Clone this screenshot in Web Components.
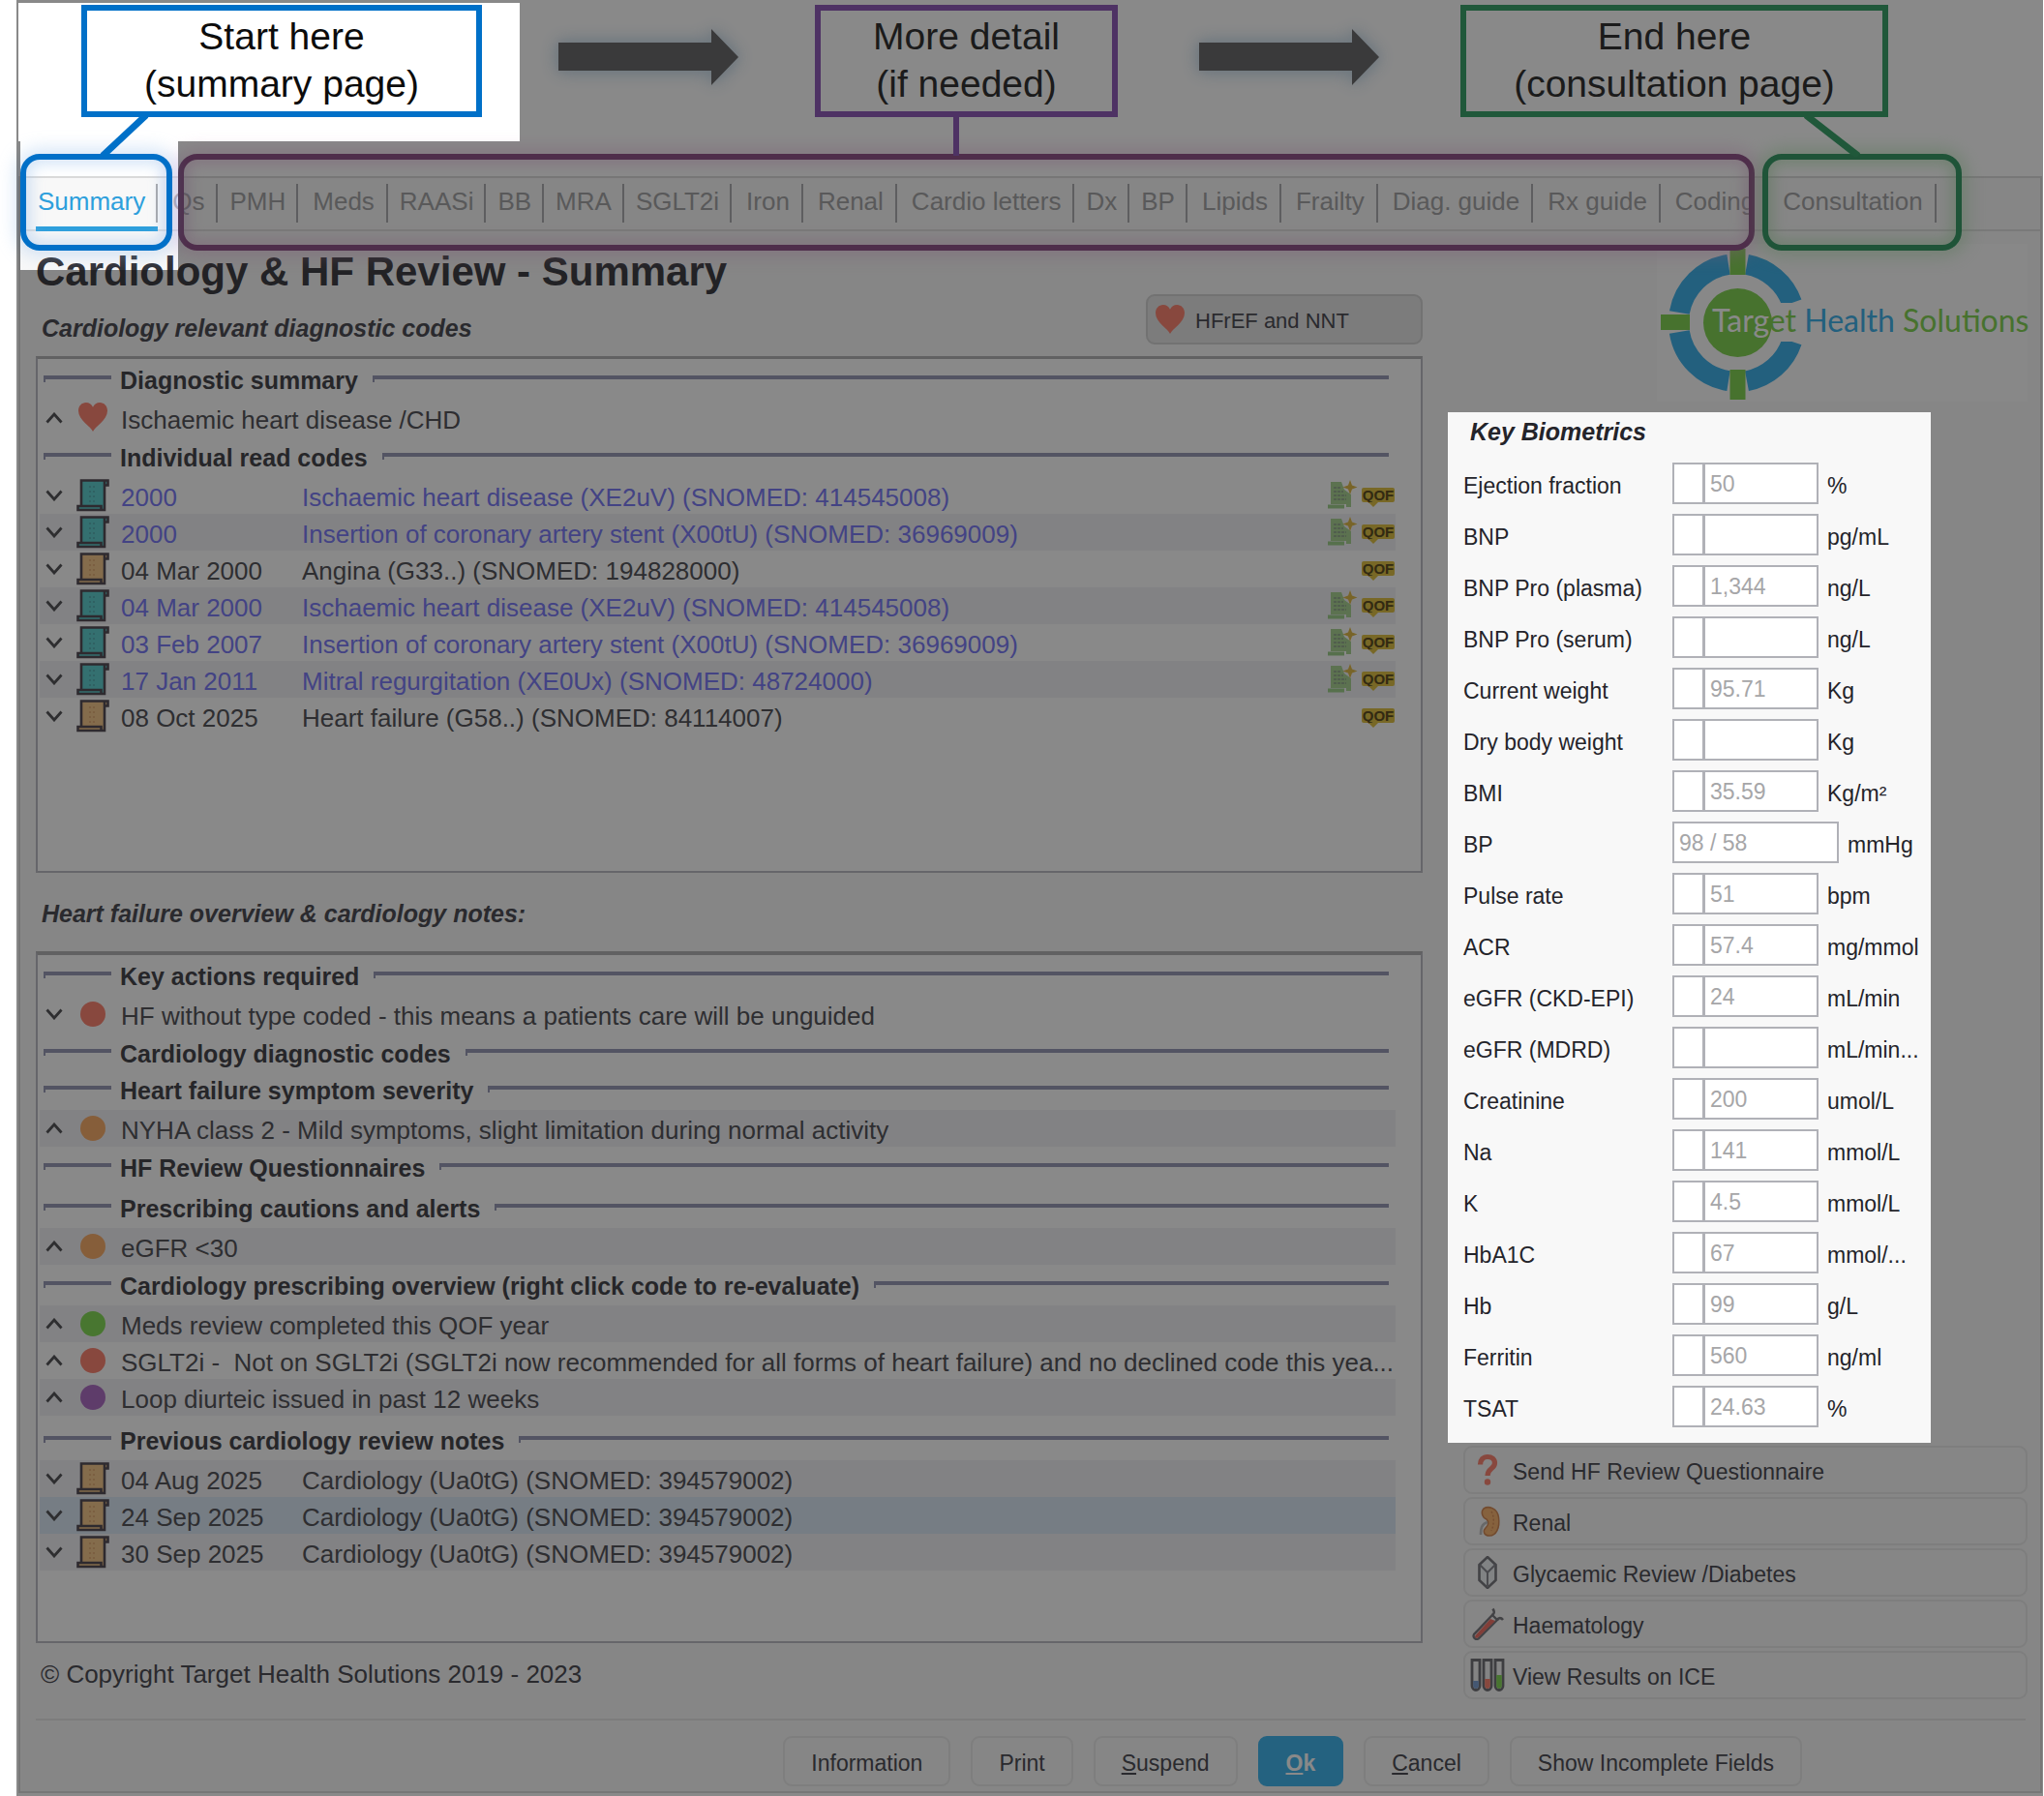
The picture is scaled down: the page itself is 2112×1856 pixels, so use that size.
<!DOCTYPE html>
<html lang="en">
<head>
<meta charset="utf-8">
<title>Cardiology &amp; HF Review</title>
<style>
  body { margin: 0; background: #fff; font-family: "Liberation Sans", Arial, sans-serif; color: #38383e; }
</style>
</head>
<body>
<review-page></review-page>

<script>
const ICONS = {
  heart: `<svg viewBox="0 0 30 30" width="30" height="30"><path d="M15 30C13 25 0 18 0 8.500C0 3.500 3.500 0 7.800 0C11 0 13.800 1.800 15 4.800C16.200 1.800 19 0 22.200 0C26.500 0 30 3.500 30 8.500C30 18 17 25 15 30Z" fill="#fc7c68"/></svg>`,
  scroll: `<svg viewBox="0 0 34 34" width="34" height="34"><path d="M5 2H31.500V6.500H29V31.500H1.500V27.500H5Z" fill="var(--paper)"/><path d="M5 27.500V1.500H32.500V6.500H29V32H1.500V28H25.500V32M29 6.500V2" fill="none" stroke="#48404a" stroke-width="2.600"/><path d="M13 8h8M13 13h8M13 18h8M13 23h8" stroke="var(--ink)" stroke-width="1.200" stroke-dasharray="2 2"/></svg>`,
  question: `<svg viewBox="0 0 34 34" width="34" height="34"><path d="M9.500 11.500C9.500 6.500 12.500 3.500 17 3.500C21.500 3.500 24.500 6 24.500 10C24.500 16 17 15 17 23" fill="none" stroke="#fc7c68" stroke-width="5.200"/><circle cx="17" cy="29.500" r="3.200" fill="#fc7c68"/></svg>`,
  kidney: `<svg viewBox="0 0 34 34" width="34" height="34"><path d="M13 4C18 1 27 3 28.500 13C30 24 26 32 19 32C13 32 12 27 15 24C18 21 19 18 16 15C11 13 10 7 13 4Z" fill="#f8b068" stroke="#d08048" stroke-width="1.500"/><path d="M21 7c3 5 3 13 0 20" fill="none" stroke="#d88850" stroke-width="1.500" stroke-dasharray="2 2"/><path d="M17 18C11 20 10 24 10 31" fill="none" stroke="#bdbdbd" stroke-width="2.600"/></svg>`,
  crystal: `<svg viewBox="0 0 34 34" width="34" height="34"><path d="M17 1L25.500 9V25L17 33L8.500 25V9Z" fill="#eef2f4" stroke="#707076" stroke-width="2.600"/><path d="M9 9L17 17L25 9M17 17V32" fill="none" stroke="#808088" stroke-width="2"/></svg>`,
  tube: `<svg viewBox="0 0 34 34" width="34" height="34"><path d="M22 8L27 13L7.500 32.500C4.500 34 1.500 31 3 28Z" fill="#f5f5f5" stroke="#707076" stroke-width="2.400"/><path d="M20 12L25 14L7 31.500C5 32.500 3 31 4.500 29Z" fill="#f0685c"/><path d="M22 8C25 6 24 4 22.500 1.500M27 13C28.500 10.500 31 10.500 33 13" fill="none" stroke="#707076" stroke-width="2.600"/></svg>`,
  tubes: `<svg viewBox="0 0 36 34" width="36" height="34"><g fill="#f4f4f4" stroke="#68686e" stroke-width="2.800"><path d="M2 1.500H10V28C10 34 2 34 2 28Z"/><path d="M14 1.500H22V28C22 34 14 34 14 28Z"/><path d="M26 1.500H34V28C34 34 26 34 26 28Z"/></g><path d="M3.200 23H8.800V28C8.800 32 3.200 32 3.200 28Z" fill="#749ad0"/><path d="M15.200 21H20.800V28C20.800 32 15.200 32 15.200 28Z" fill="#fc7c68"/><path d="M27.200 17H32.800V28C32.800 32 27.200 32 27.200 28Z" fill="#7cd44c"/></svg>`,
  up: `<svg viewBox="0 0 18 12" width="18" height="12"><path d="M1.500 10.500L9 2L16.500 10.500" fill="none" stroke="#48484c" stroke-width="2.800"/></svg>`,
  down: `<svg viewBox="0 0 18 12" width="18" height="12"><path d="M1.500 1.500L9 10L16.500 1.500" fill="none" stroke="#48484c" stroke-width="2.800"/></svg>`,
  note: `<svg viewBox="0 0 32 32" width="32" height="32"><path d="M4 2H15L18 10L25 15V28H20V25H4Z" fill="#a4d08c"/><path d="M7 8h7M7 12h10M7 16h13M7 20h13" stroke="#889c84" stroke-width="1.600" stroke-dasharray="3 1"/><path d="M1 27.500H18" stroke="#98cc84" stroke-width="4"/><path d="M24 0L26 5.500L31.500 7.500L26 9.500L24 15L22 9.500L16.500 7.500L22 5.500Z" fill="#dcb43c"/></svg>`
};

function define(name, html, setup) {
  const tpl = document.createElement('template');
  tpl.innerHTML = html;
  customElements.define(name, class extends HTMLElement {
    constructor() {
      super();
      this.attachShadow({ mode: 'open' }).append(tpl.content.cloneNode(true));
    }
    connectedCallback() { if (setup) setup(this, this.shadowRoot); }
  });
}

/* Boxed caption above the tabs */
define('step-callout', `
<style>
  :host { display: block; box-sizing: border-box; border: 6px solid var(--tone); padding: 2px 0 4px;
    font-size: 39px; line-height: 49px; text-align: center; color: var(--text, #222); white-space: nowrap; }
</style><slot></slot>`);

define('step-arrow', `
<style>
  :host { display: block; width: 186px; height: 58px; }
  svg { display: block; overflow: visible; filter: drop-shadow(0 0 9px #c8dcea) drop-shadow(0 0 5px #d4e2ee); }
</style>
<svg viewBox="0 0 186 58" width="186" height="58"><path d="M0 14H158V0L186 29L158 58V43H0Z" fill="#606062"/></svg>`);

define('nav-tab', `
<style>
  :host { display: flex; align-items: center; position: relative; height: 51px; }
  button { height: 40px; box-sizing: border-box; border: 0; border-right: 2px solid #a8a8ac; background: none; margin: 0; padding: 0 12px 4px 15px;
    font: 26px/36px "Liberation Sans", Arial, sans-serif; color: #9e9ea0; white-space: nowrap; }
  :host([compact]) button { padding: 0 11px 4px 12px; }
  :host([active]) button { padding: 0 11px 4px 2px; color: #2d9fdc; }
  :host([active])::after { content: ""; position: absolute; left: 0; right: 0; bottom: -4px; height: 5px; background: #2d9fdc; }
</style><button role="tab" type="button"><slot></slot></button>`);

/* Rounded marker drawn round a run of tabs */
define('tab-marker', `
<style>
  :host { display: block; position: absolute; box-sizing: border-box; height: 100px; border: 6px solid var(--tone); border-radius: 20px;
    box-shadow: 0 0 18px 5px var(--glow), inset 0 0 14px 5px var(--glow); pointer-events: none; }
</style>`);

define('group-head', `
<style>
  :host { display: flex; align-items: flex-end; box-sizing: border-box; height: 42px; margin: 0 7px 0 2px; gap: 9px; }
  :host([tight]) { height: 38px; }
  :host([roomy]) { height: 46px; }
  span { font-size: 25px; font-weight: bold; line-height: 30px; margin-bottom: 5px; white-space: nowrap; color: #38383e; }
  i { height: 7px; margin-bottom: 18px; flex: 1; margin-left: 6px;
    background: linear-gradient(#9294b2, #9294b2) 0 0 / 100% 4px no-repeat, linear-gradient(#9294b2, #9294b2) 0 0 / 2px 7px no-repeat; }
  i:first-of-type { flex: 0 0 70px; margin-left: 2px; }
</style><i></i><span><slot></slot></span><i></i>`);

define('record-row', `
<style>
  :host { display: flex; align-items: center; height: 38px; padding-left: 6px; font-size: 26px; line-height: 32px; white-space: pre; color: #48484e; }
  :host([shade]) { background: #f1f1f5; }
  :host([selected]) { background: #d8e6f4; }
  :host([linked]) { color: #7272f4; }
  .toggle { width: 32px; padding: 0; border: 0; background: none; height: 30px; text-align: left; }
  .toggle svg { display: block; }
  .icon { width: 46px; display: flex; align-items: center; flex: none; }
  .dot { width: 26px; height: 26px; border-radius: 50%; background: var(--dot); margin-left: 4px; }
  .heart { margin: 0 0 2px 2px; display: flex; }
  .date { width: 187px; padding-top: 3px; flex: none; }
  .text { padding-top: 3px; flex: 1; min-width: 0; }
  .tags { display: flex; align-items: center; gap: 4px; padding-right: 1px; }
  .tags svg { display: block; }
  .qof { position: relative; width: 34px; height: 15px; margin-bottom: 1px; border-radius: 2px; background: #dcbc38; color: #504010;
    font: bold 15px/16px "Liberation Sans", Arial, sans-serif; text-align: center; }
  .qof::after { content: ""; position: absolute; left: 7px; top: 15px; border: 5px solid transparent; border-top-color: #dcbc38; border-bottom: 0; }
</style>
<button class="toggle" type="button" aria-label="Toggle"></button><span class="icon"></span><span class="date"></span><span class="text"><slot></slot></span><span class="tags"></span>`,
(el, root) => {
  root.querySelector('.toggle').innerHTML = ICONS[el.getAttribute('toggle') || 'down'];
  const dots = { red: '#fc7c68', orange: '#f8a860', green: '#7cd84c', purple: '#a864c0' };
  const papers = { teal: ['#54cccc', '#44909a'], tan: ['#f4c484', '#d0905a'] };
  const kind = el.getAttribute('icon'), box = root.querySelector('.icon');
  if (dots[kind]) box.innerHTML = `<span class="dot" style="--dot:${dots[kind]}"></span>`;
  else if (papers[kind]) { box.style.setProperty('--paper', papers[kind][0]); box.style.setProperty('--ink', papers[kind][1]); box.innerHTML = ICONS.scroll; }
  else box.innerHTML = `<span class="heart">${ICONS.heart}</span>`;
  const date = root.querySelector('.date');
  if (el.hasAttribute('date')) date.textContent = el.getAttribute('date'); else date.remove();
  const tags = el.getAttribute('tags') || '';
  root.querySelector('.tags').innerHTML = (tags.includes('note') ? ICONS.note : '') + (tags.includes('qof') ? '<span class="qof">QOF</span>' : '');
});

define('record-panel', `
<style>
  :host { display: block; box-sizing: border-box; border: 2px solid #b8b8c0; border-top: 3px solid #aeaeb0; background: #fff; padding: 0 26px 0 2px; overflow: hidden; }
</style><slot></slot>`);

define('bio-field', `
<style>
  :host { display: flex; align-items: center; height: 43px; font-size: 23px; line-height: 28px; color: #24242a; white-space: nowrap; }
  label { width: 216px; padding-top: 4px; flex: none; }
  .flag { box-sizing: border-box; width: 32px; height: 43px; border: 2px solid #b0b1b7; border-right-width: 1px; background: #fff; }
  input { box-sizing: border-box; width: 119px; height: 43px; margin: 0; border: 2px solid #b0b1b7; border-radius: 0; background: #fff;
    padding: 1px 5px 0; font: 23px "Liberation Sans", Arial, sans-serif; color: #a6a6a8; outline: 0; }
  :host([single]) .flag { display: none; }
  :host([single]) input { width: 172px; }
  .unit { padding: 4px 0 0 9px; }
</style>
<label for="value"><slot></slot></label><span class="flag"></span><input id="value" readonly><span class="unit"></span>`,
(el, root) => {
  root.querySelector('input').value = el.getAttribute('value') || '';
  root.querySelector('.unit').textContent = el.getAttribute('unit');
});

/* Raised above the dimming layer so that it stays bright */
define('bio-panel', `
<style>
  :host { display: flex; flex-direction: column; gap: 10px; position: relative; z-index: 5; box-sizing: border-box; width: 499px; background: #f8f8f8; padding: 5px 0 16px 16px; }
  h2 { margin: 0 0 7px 7px; font: italic bold 25px/30px "Liberation Sans", Arial, sans-serif; color: #24242a; }
</style><h2>Key Biometrics</h2><slot></slot>`);

define('side-button', `
<style>
  :host { display: block; }
  button { display: flex; align-items: center; width: 100%; height: 50px; box-sizing: border-box; margin: 0; padding: 0 6px; text-align: left;
    border: 2px solid #e8e8e8; border-radius: 9px; background: none; font: 23px/28px "Liberation Sans", Arial, sans-serif; color: #404048; }
  .icon { display: flex; justify-content: center; width: 34px; margin-right: 9px; }
  .icon svg { flex: none; }
  .text { padding-top: 4px; }
  :host([filled]) { width: 286px; }
  :host([filled]) button { height: 52px; background: #e4e4e4; border-color: #d0d0d0; font-size: 22px; }
</style><button type="button"><span class="icon"></span><span class="text"><slot></slot></span></button>`,
(el, root) => { root.querySelector('.icon').innerHTML = ICONS[el.getAttribute('icon')]; });

define('action-button', `
<style>
  :host { display: block; }
  button { height: 52px; box-sizing: border-box; margin: 0; padding: 4px 27px 0; border: 2px solid #e8e8e8; border-radius: 9px; background: none;
    font: 23px/28px "Liberation Sans", Arial, sans-serif; color: #404048; }
  :host([primary]) button { background: #34b0ec; border-color: #34b0ec; color: #fff; font-weight: bold; }
</style><button type="button"><slot></slot></button>`);

define('brand-logo', `
<style>
  :host { display: block; width: 383px; height: 163px; background: #fcfcfc; }
  svg { display: block; overflow: visible; }
  text { font: 32px Lato, sans-serif; }
</style>
<svg viewBox="0 0 383 163" width="383" height="163" role="img" aria-label="Target Health Solutions">
  <g fill="none" stroke="#32ace8" stroke-width="21">
    <path d="M93 21.300A61 61 0 0 1 139.500 61"/>
    <path d="M139.500 101A61 61 0 0 1 93 141.700"/>
    <path d="M74 141.700A61 61 0 0 1 23.300 91"/>
    <path d="M23.300 71A61 61 0 0 1 74 21.300"/>
  </g>
  <path d="M125 61H153V101H125Z" fill="#fcfcfc"/>
  <g fill="#7ad048">
    <path d="M75.500 5H91.500V32H75.500ZM75.500 130H91.500V161H75.500ZM4 73H34V89H4Z"/>
    <circle cx="83.500" cy="81.500" r="35.500"/>
  </g>
  <text x="57" y="91" fill="#fff">Targ<tspan fill="#7ad048">et </tspan><tspan fill="#32ace8">Health </tspan><tspan fill="#7ad048">Solutions</tspan></text>
</svg>`);

define('review-page', `
<style>
  :host { display: block; position: relative; min-height: 100vh; margin: 0 1px 0 17px; box-sizing: border-box; }
  .steps { display: flex; align-items: flex-start; gap: 79px; height: 182px; box-sizing: border-box; padding: 5px 0 0 67px; }
  .steps step-arrow { margin-top: 25px; }
  .steps step-arrow.last { margin-left: 5px; margin-right: 5px; }
  .links { position: absolute; left: 0; top: 116px; z-index: 2; pointer-events: none; }
  .form { box-sizing: border-box; border: 2px solid #dadada; margin: 0 1px 0 2px; background: #f8f8f8; }
  .tabs { display: flex; height: 53px; border-bottom: 2px solid #dedede; padding-left: 16px; position: relative; }
  tab-marker { top: -25px; z-index: 1; }
  .main { display: flex; gap: 26px; padding: 0 13px 0 16px; }
  .left { flex: 1; min-width: 0; }
  .right { width: 599px; display: flex; flex-direction: column; padding-top: 13px; }
  h1 { margin: 18px 0 0; font-size: 42px; line-height: 47px; color: #303036; }
  .sub { display: flex; justify-content: space-between; align-items: flex-end; margin-bottom: 12px; }
  h2 { margin: 0 0 2px 6px; font: italic bold 25px/30px "Liberation Sans", Arial, sans-serif; color: #404048; }
  h2.notes { margin: 27px 0 24px 6px; }
  .codes { height: 534px; }
  .overview { height: 715px; border-top-width: 4px; }
  .copy { margin: 17px 0 0 5px; font-size: 26px; line-height: 30px; color: #404048; }
  brand-logo { align-self: flex-end; margin-bottom: 11px; }
  .side { display: flex; flex-direction: column; gap: 3px; margin: 3px 0 0 16px; }
  footer { display: flex; justify-content: flex-end; gap: 21px; margin: 20px 15px 0 16px; padding: 16px 231px 5px 0; border-top: 2px solid #e4e4e4; }
  .dim { position: absolute; inset: 0; z-index: 3; background: rgba(20, 20, 20, .5); pointer-events: none;
    clip-path: polygon(evenodd, 0 0, 100% 0, 100% 100%, 0 100%, 0 0, 2px 3px, 520px 3px, 520px 146px, 167px 146px, 167px 279px, 4px 279px, 4px 146px, 2px 146px, 2px 3px, 0 0); }
</style>
<div class="steps">
  <step-callout style="--tone:#0070c8;--text:#0c0c0c;width:414px">Start here<br>(summary page)</step-callout>
  <step-arrow></step-arrow>
  <step-callout style="--tone:#8850b4;width:313px">More detail<br>(if needed)</step-callout>
  <step-arrow class="last"></step-arrow>
  <step-callout style="--tone:#2c9c60;width:442px">End here<br>(consultation page)</step-callout>
</div>
<svg class="links" width="2000" height="46" viewBox="0 0 2000 46" fill="none" stroke-width="7">
  <path d="M134 3L89 45" stroke="#0070c8"/><path d="M971 3V45" stroke="#8850b4" stroke-width="6"/><path d="M1849 3L1903 45" stroke="#2c9c60"/>
</svg>
<div class="form">
  <nav class="tabs" role="tablist">
    <nav-tab active>Summary</nav-tab><nav-tab>Qs</nav-tab><nav-tab compact>PMH</nav-tab><nav-tab>Meds</nav-tab><nav-tab compact>RAASi</nav-tab><nav-tab compact>BB</nav-tab><nav-tab compact>MRA</nav-tab><nav-tab compact>SGLT2i</nav-tab><nav-tab>Iron</nav-tab><nav-tab>Renal</nav-tab><nav-tab>Cardio letters</nav-tab><nav-tab compact>Dx</nav-tab><nav-tab compact>BP</nav-tab><nav-tab>Lipids</nav-tab><nav-tab>Frailty</nav-tab><nav-tab>Diag. guide</nav-tab><nav-tab>Rx guide</nav-tab><nav-tab>Coding</nav-tab><nav-tab>Consultation</nav-tab>
    <tab-marker style="--tone:#8a4682;--glow:rgba(228,170,216,.45);left:163px;width:1629px"></tab-marker>
    <tab-marker style="--tone:#0070c8;--glow:rgba(150,190,235,.4);left:0;width:157px"></tab-marker>
    <tab-marker style="--tone:#2a945c;--glow:rgba(150,220,150,.45);left:1800px;width:206px"></tab-marker>
  </nav>
  <div class="main">
    <div class="left">
      <h1>Cardiology &amp; HF Review - Summary</h1>
      <div class="sub"><h2>Cardiology relevant diagnostic codes</h2><side-button filled icon="heart">HFrEF and NNT</side-button></div>
      <record-panel class="codes">
        <group-head>Diagnostic summary</group-head>
        <record-row toggle="up" icon="heart">Ischaemic heart disease /CHD</record-row>
        <group-head>Individual read codes</group-head>
        <record-row linked icon="teal" date="2000" tags="note qof">Ischaemic heart disease (XE2uV) (SNOMED: 414545008)</record-row>
        <record-row linked shade icon="teal" date="2000" tags="note qof">Insertion of coronary artery stent (X00tU) (SNOMED: 36969009)</record-row>
        <record-row icon="tan" date="04 Mar 2000" tags="qof">Angina (G33..) (SNOMED: 194828000)</record-row>
        <record-row linked shade icon="teal" date="04 Mar 2000" tags="note qof">Ischaemic heart disease (XE2uV) (SNOMED: 414545008)</record-row>
        <record-row linked icon="teal" date="03 Feb 2007" tags="note qof">Insertion of coronary artery stent (X00tU) (SNOMED: 36969009)</record-row>
        <record-row linked shade icon="teal" date="17 Jan 2011" tags="note qof">Mitral regurgitation (XE0Ux) (SNOMED: 48724000)</record-row>
        <record-row icon="tan" date="08 Oct 2025" tags="qof">Heart failure (G58..) (SNOMED: 84114007)</record-row>
      </record-panel>
      <h2 class="notes">Heart failure overview &amp; cardiology notes:</h2>
      <record-panel class="overview">
        <group-head>Key actions required</group-head>
        <record-row icon="red">HF without type coded - this means a patients care will be unguided</record-row>
        <group-head>Cardiology diagnostic codes</group-head>
        <group-head tight>Heart failure symptom severity</group-head>
        <record-row shade toggle="up" icon="orange">NYHA class 2 - Mild symptoms, slight limitation during normal activity</record-row>
        <group-head>HF Review Questionnaires</group-head>
        <group-head>Prescribing cautions and alerts</group-head>
        <record-row shade toggle="up" icon="orange">eGFR &lt;30</record-row>
        <group-head>Cardiology prescribing overview (right click code to re-evaluate)</group-head>
        <record-row shade toggle="up" icon="green">Meds review completed this QOF year</record-row>
        <record-row toggle="up" icon="red">SGLT2i -  Not on SGLT2i (SGLT2i now recommended for all forms of heart failure) and no declined code this yea...</record-row>
        <record-row shade toggle="up" icon="purple">Loop diurteic issued in past 12 weeks</record-row>
        <group-head roomy>Previous cardiology review notes</group-head>
        <record-row shade icon="tan" date="04 Aug 2025">Cardiology (Ua0tG) (SNOMED: 394579002)</record-row>
        <record-row selected icon="tan" date="24 Sep 2025">Cardiology (Ua0tG) (SNOMED: 394579002)</record-row>
        <record-row shade icon="tan" date="30 Sep 2025">Cardiology (Ua0tG) (SNOMED: 394579002)</record-row>
      </record-panel>
      <p class="copy">© Copyright Target Health Solutions 2019 - 2023</p>
    </div>
    <div class="right">
      <brand-logo></brand-logo>
      <bio-panel>
        <bio-field value="50" unit="%">Ejection fraction</bio-field>
        <bio-field unit="pg/mL">BNP</bio-field>
        <bio-field value="1,344" unit="ng/L">BNP Pro (plasma)</bio-field>
        <bio-field unit="ng/L">BNP Pro (serum)</bio-field>
        <bio-field value="95.71" unit="Kg">Current weight</bio-field>
        <bio-field unit="Kg">Dry body weight</bio-field>
        <bio-field value="35.59" unit="Kg/m²">BMI</bio-field>
        <bio-field single value="98 / 58" unit="mmHg">BP</bio-field>
        <bio-field value="51" unit="bpm">Pulse rate</bio-field>
        <bio-field value="57.4" unit="mg/mmol">ACR</bio-field>
        <bio-field value="24" unit="mL/min">eGFR (CKD-EPI)</bio-field>
        <bio-field unit="mL/min...">eGFR (MDRD)</bio-field>
        <bio-field value="200" unit="umol/L">Creatinine</bio-field>
        <bio-field value="141" unit="mmol/L">Na</bio-field>
        <bio-field value="4.5" unit="mmol/L">K</bio-field>
        <bio-field value="67" unit="mmol/...">HbA1C</bio-field>
        <bio-field value="99" unit="g/L">Hb</bio-field>
        <bio-field value="560" unit="ng/ml">Ferritin</bio-field>
        <bio-field value="24.63" unit="%">TSAT</bio-field>
      </bio-panel>
      <div class="side">
        <side-button icon="question">Send HF Review Questionnaire</side-button>
        <side-button icon="kidney">Renal</side-button>
        <side-button icon="crystal">Glycaemic Review /Diabetes</side-button>
        <side-button icon="tube">Haematology</side-button>
        <side-button icon="tubes">View Results on ICE</side-button>
      </div>
    </div>
  </div>
  <footer>
    <action-button>Information</action-button>
    <action-button>Print</action-button>
    <action-button><u>S</u>uspend</action-button>
    <action-button primary><u>O</u>k</action-button>
    <action-button><u>C</u>ancel</action-button>
    <action-button>Show Incomplete Fields</action-button>
  </footer>
</div>
<div class="dim"></div>`);
</script>
</body>
</html>
